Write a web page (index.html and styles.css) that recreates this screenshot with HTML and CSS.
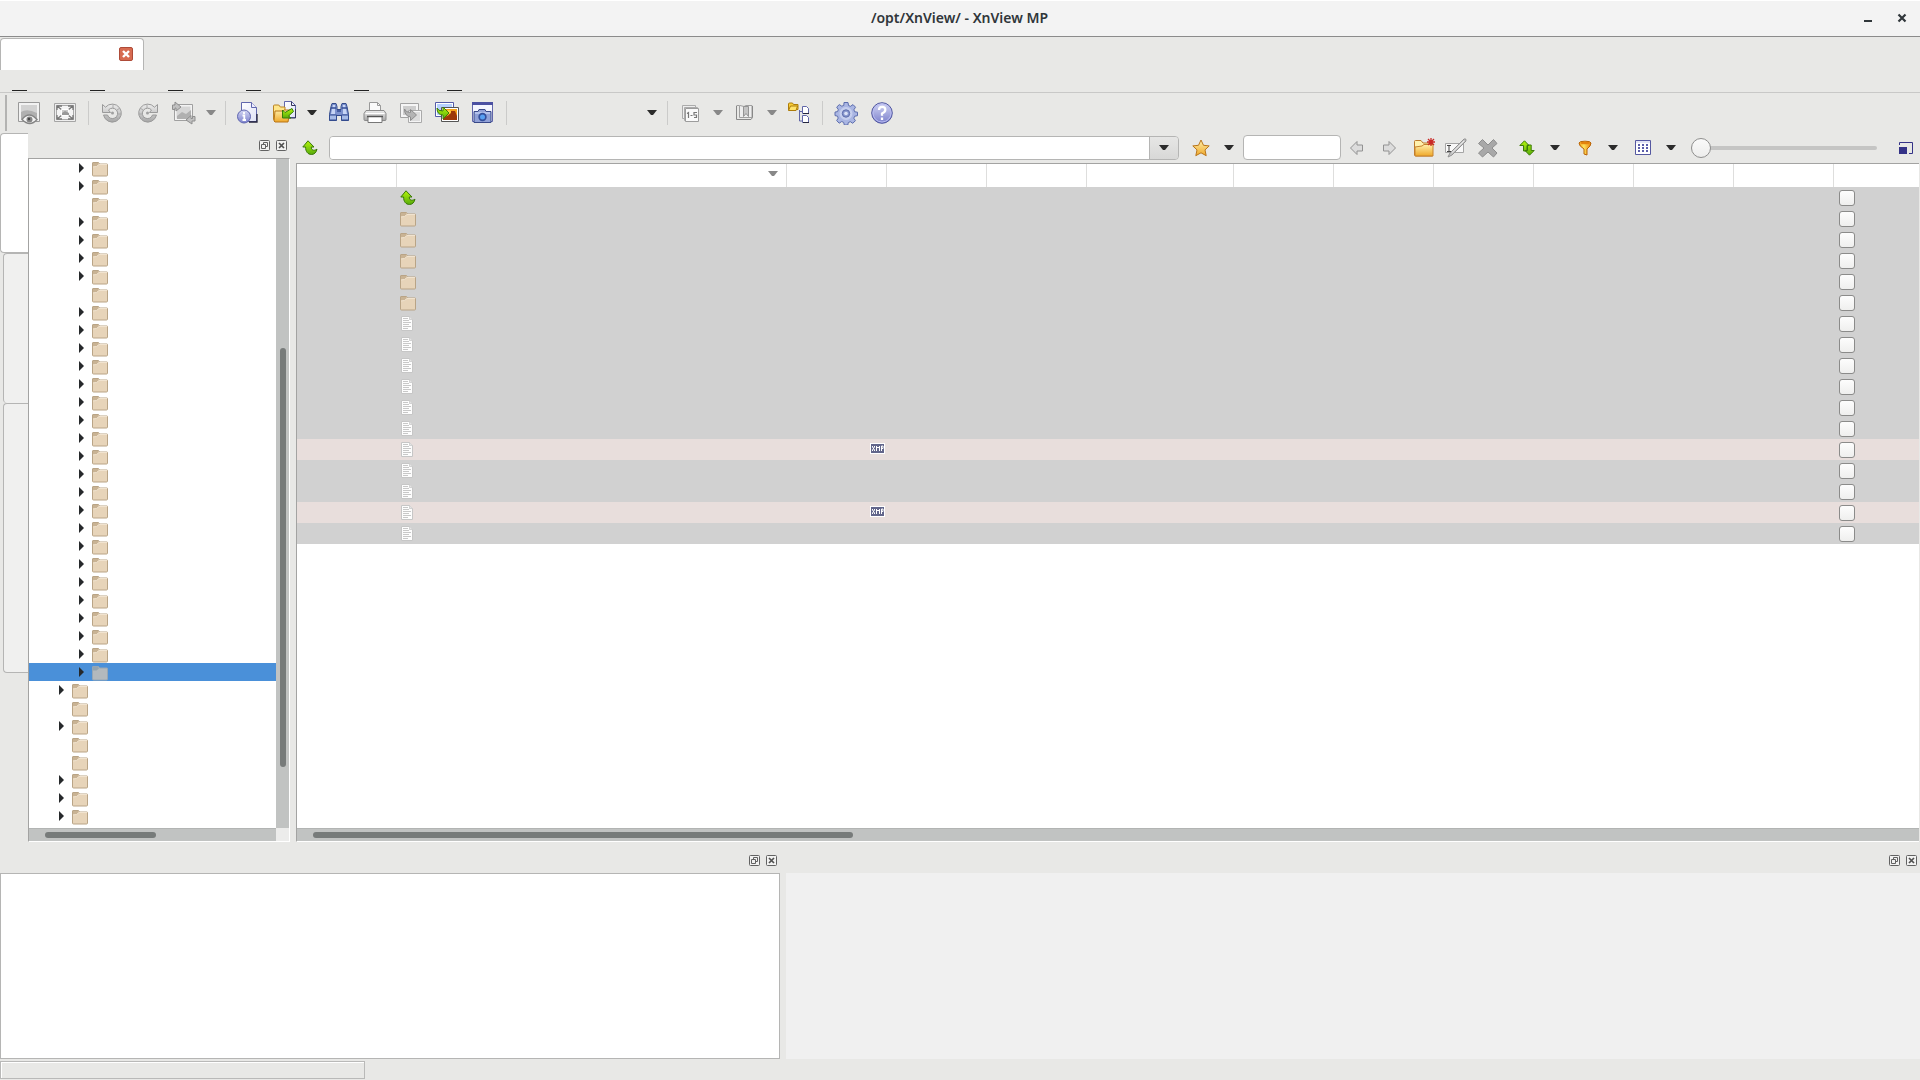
FILE: index.html
```html
<!DOCTYPE html>
<html lang="en">
<head>
<meta charset="utf-8">
<meta name="viewport" content="width=device-width, initial-scale=1">
<title>/opt/XnView/ - XnView MP</title>
<link rel="stylesheet" href="styles.css">
</head>
<body>
<svg class="defs" aria-hidden="true">
  <defs>
    <linearGradient id="g-grey" x1="0" y1="0" x2="0" y2="1"><stop offset="0" stop-color="#ededed"/><stop offset="1" stop-color="#a6a6a6"/></linearGradient>
    <linearGradient id="g-green" x1="0" y1="0" x2="0" y2="1"><stop offset="0" stop-color="#b4f50c"/><stop offset="1" stop-color="#57ab0b"/></linearGradient>
    <linearGradient id="g-gold" x1="0" y1="0" x2="0" y2="1"><stop offset="0" stop-color="#ffefaa"/><stop offset="1" stop-color="#efa829"/></linearGradient>
    <linearGradient id="g-blue" x1="0" y1="0" x2="0" y2="1"><stop offset="0" stop-color="#d4d7f4"/><stop offset="1" stop-color="#7b80cc"/></linearGradient>
    <linearGradient id="g-page" x1="0" y1="0" x2="1" y2="1"><stop offset="0" stop-color="#fff"/><stop offset="1" stop-color="#dfe2f7"/></linearGradient>
    <linearGradient id="g-orange" x1="0" y1="0" x2="1" y2="0"><stop offset="0" stop-color="#f39a15"/><stop offset=".4" stop-color="#ffe35c"/><stop offset="1" stop-color="#e87f0a"/></linearGradient>
  </defs>
  <symbol id="caret" viewBox="0 0 10 6"><path d="M0 0h10L6 5H4z" fill="currentColor"/></symbol>
  <symbol id="branch" viewBox="0 0 6 10"><path d="M0 0l5 5-5 5z" fill="#26292b"/></symbol>
  <symbol id="folder" viewBox="0 0 16 16"><path d="M.5 14V2Q.5 1.500 1 1.500h5.500l1 1.500H15q.5 0 .5.500V14q0 1-1 1h-13q-1 0-1-1z" fill="#e7d4b9" stroke="#b9a486"/><path d="M1 5.500V2h5l1 1.500L4.500 5.500z" fill="#c9b394"/><path d="M1 6l3.500-.5L7 3.500h8" fill="none" stroke="#f1e3cf"/></symbol>
  <symbol id="folder-selected" viewBox="0 0 16 16"><path d="M.5 14V2Q.5 1.500 1 1.500h5.500l1 1.500H15q.5 0 .5.500V14q0 1-1 1h-13q-1 0-1-1z" fill="#b3b9bd" stroke="#96a6b4"/><path d="M1 5.500V2h5l1 1.500L4.500 5.500z" fill="#93a3ae"/></symbol>
  <symbol id="up" viewBox="0 0 16 16"><path d="M6 .8L12 7H9.300c-.1 3 2.200 4.300 5.700 2.200-.7 3.300-2.800 5.300-5.500 5.300C5.800 14.500 3.500 11.500 3.600 7H.8z" fill="url(#g-green)" stroke="#3a7808"/></symbol>
  <symbol id="document" viewBox="0 0 16 16"><path d="M1.500.500h8l3 3v11h-11z" fill="#fdfdfd" stroke="#c6c6c6"/><path d="M9.500.500v3h3" fill="#e4e4e4" stroke="#c4c4c4" stroke-width=".7"/><path d="M3 2.500h5M3 4.500h6M3 6.500h8M3 8.500h6M3 10.500h8M3 12.500h5" stroke="#c8c8c8" fill="none"/></symbol>
  <symbol id="xmp" viewBox="0 0 16 12"><path d="M0 0h15v11H0z" fill="#fff"/><path d="M1 1h13v9H1z" fill="#62668b"/><path d="M2.500 3v1l2 3v1M4.500 3v1l-2 3v1M6.500 8V3M9.500 8V3M6.500 4.500h3M11.500 8V3h1.500v2.500h-1.500" fill="none" stroke="#fff"/></symbol>
  <symbol id="float" viewBox="0 0 12 12"><rect x=".5" y=".5" width="10" height="10" rx="1" fill="#f2f2f1" stroke="#626262"/><path d="M4.500 4.500v-2h4v4h-2M2.500 4.500h4v4h-4z" fill="none" stroke="#626262"/></symbol>
  <symbol id="dock-close" viewBox="0 0 12 12"><rect x=".5" y=".5" width="10" height="10" rx="1" fill="#f2f2f1" stroke="#626262"/><path d="M3 3l5 5M8 3L3 8" stroke="#505050" stroke-width="1.700"/></symbol>
  <symbol id="view" viewBox="0 0 24 24"><path d="M1.500 1.500h21v19h-21z" fill="#f2f2f2" stroke="#999"/><path d="M4 4h16v14H4z" fill="#d2d2d2"/><path d="M4 11q6-4 16 1v6H4z" fill="#b0b0b0"/><path d="M5 18.500q7-9 15 0-7 8-15 0z" fill="#f4f4f4" stroke="#858585" stroke-width="1.500"/><circle cx="12.500" cy="18.500" r="3" fill="#858585"/><circle cx="12" cy="18" r="1.200" fill="#444"/></symbol>
  <symbol id="fullscreen" viewBox="0 0 24 24"><path d="M1.500 2.500h21v18h-21z" fill="#eee" stroke="#a5a5a5"/><path d="M3.500 4.500h17v14h-17z" fill="#f5f5f5" stroke="#aaa"/><path d="M4 9V5h5M15 5h5v4M20 14v4h-5M9 18H4v-4M4 5l5 4M20 5l-5 4M4 18l5-4M20 18l-5-4" fill="none" stroke="#777" stroke-width="1.300"/><path d="M8.500 8.500h7v6h-7z" fill="#c9c9c9" stroke="#fff"/><path d="M9 12l3-2 4 2v2H9z" fill="#999"/></symbol>
  <symbol id="rotate" viewBox="0 0 24 24"><path d="M5.500 6.200A9 9 0 1 1 3.500 14h4A5.200 5.200 0 1 0 8.500 9l2 2.500h-8v-8z" fill="url(#g-grey)" stroke="#9a9a9a"/><path d="M13 3v4M20 7l-3 2M21.500 13h-4M19 19l-3-3" stroke="#aaa"/><circle cx="12.500" cy="12" r="1.500" fill="#a0a0a0"/></symbol>
  <symbol id="transform" viewBox="1 0 24 24"><path d="M3.500 3.500h18v16h-18z" fill="#f3f3f3" stroke="#a0a0a0"/><path d="M5.500 5.500h14v12h-14z" fill="#d6d6d6"/><path d="M6 15l5-4 4 2 5-4v9H6z" fill="#b0b0b0"/><path d="M1.500 8.500V4H4V1l6 5-5 4V7H4v1.500zM24 15.500v4.500h-3v3l-6-4 5-4.500v3h1.500v-2z" fill="#c0c0c0" stroke="#8e8e8e"/></symbol>
  <symbol id="info" viewBox="2 0 24 24"><path d="M6.500 1.500h10l5 5v14h-15z" fill="url(#g-page)" stroke="#6067ad"/><path d="M16.500 1.500v5h5" fill="#eef" stroke="#6067ad"/><path d="M14 21h8v-8" fill="none" stroke="#25253c" stroke-width="1.300"/><circle cx="9" cy="15.500" r="6.500" fill="url(#g-blue)" stroke="#6167b0"/><path d="M9 11v2M7.500 14.500H9.300V19M7.500 19h3.500" stroke="#fff" stroke-width="1.800" fill="none"/></symbol>
  <symbol id="open" viewBox="1 0 24 24"><path d="M12.500.5h7l4 4v12h-11z" fill="url(#g-page)" stroke="#6067ad"/><path d="M19.500.5v4h4M14 17h9.500V8" fill="none" stroke="#35375b"/><path d="M1.500 18V5q0-1 1-1h4.300l1.500 2H13v13H2z" fill="#ffe68a" stroke="#b98325"/><path d="M2 20l1-10h8l1-1h6l-2 12H3z" fill="url(#g-gold)" stroke="#b87519"/><path d="M20 7.500l1.500 3-5 4.500 2.500 2h-8.500V9l2.500 2.500z" fill="url(#g-green)" stroke="#347e0a"/></symbol>
  <symbol id="search" viewBox="0 0 24 24"><path d="M5 2.500h4l1 3v3h4v-3l1-3h4l1 3 1.500 8v6h-7v-5h-5v5h-7v-6L4 5.500z" fill="#7c91cd" stroke="#334b8b"/><path d="M6 4h2v9H4zM16 4h2l2 9h-4z" fill="#c7d5f5"/><path d="M2.500 14h7v5h-7zM14.500 14h7v5h-7z" fill="#a6bbe7" stroke="#344d91"/><path d="M10 10h4M4 7h5M15 7h5" stroke="#354e95" stroke-width="1.500"/></symbol>
  <symbol id="print" viewBox="0 0 24 24"><path d="M6.500 10V1.500h8l3 3V10" fill="#fafafa" stroke="#999"/><path d="M14.500 1.500v3h3" fill="none" stroke="#999"/><path d="M3 9.500h18l2 3v6q0 1-1 1H2q-1 0-1-1v-6z" fill="url(#g-grey)" stroke="#8b8b8b"/><path d="M2.500 12.500h19" stroke="#fff"/><path d="M5 15.500h14v6H5z" fill="#fff" stroke="#777"/><path d="M4 15.500h16" stroke="#555" stroke-width="1.500"/></symbol>
  <symbol id="convert" viewBox="0 0 24 24"><path d="M1.500 2.500h18v14h-18z" fill="#f5f5f5" stroke="#a3a3a3"/><path d="M4 5h13v9H4z" fill="#cdcdcd"/><path d="M9.500 9.500h13v12h-13z" fill="#f5f5f5" stroke="#aaa"/><path d="M11 11h10v9H11z" fill="#dcdcdc"/><path d="M5.500 8q1 3.500 6 3.500V8.500l6 5.500-6 5.500V16Q5.500 15 5.500 8z" fill="#b4b4b4" stroke="#8c8c8c"/></symbol>
  <symbol id="batch" viewBox="0 0 24 24"><path d="M.5 1.500h18v14H.5z" fill="#fff" stroke="#545ba8"/><path d="M2 3h15v11H2z" fill="#b6d1ff"/><path d="M6.500 6.500h17v14h-17z" fill="#fff" stroke="#555"/><path d="M8 8h14v11H8z" fill="#f6a21b"/><path d="M8 17l6-3 2-4h4l2 5v4H8z" fill="#9d3909"/><circle cx="14" cy="11" r="2" fill="#ffd83f"/><path d="M2 7q1 3 6 3V6l6 6-6 6v-4Q2 14 2 7z" fill="url(#g-green)" stroke="#3b7c08"/></symbol>
  <symbol id="capture" viewBox="0 0 24 24"><path d="M1.500 1.500h20v19h-20z" fill="#f4f5ff" stroke="#6166aa"/><path d="M1 1h21v3H1z" fill="#4b50a2"/><path d="M3 10.500h4l1-2h6l1 2h5v11H3z" fill="#91a1d7" stroke="#394988"/><path d="M4 12h15" stroke="#d6e1ff"/><circle cx="11.500" cy="16" r="4.200" fill="#344f9b"/><circle cx="11.500" cy="16" r="2.500" fill="#58a0f2"/></symbol>
  <symbol id="sort" viewBox="1 0 24 24"><path d="M4.500 4.500h13v13h-13zM6.500 6.500h13v13h-13z" fill="#eee" stroke="#ababab"/><path d="M7.500 7.500h13v13h-13z" fill="#fafafa" stroke="#9c9c9c"/><path d="M9 12.500l1.500-1V17M12.500 14.500h2M19 11.500h-3V14h2.500v2.500H16" fill="none" stroke="#777" stroke-width="1.200"/></symbol>
  <symbol id="bookmark" viewBox="1 0 24 24"><path d="M4.500 4.500h3v12H20v-12h-6l-2 1-4-1" fill="#eee" stroke="#9f9f9f"/><path d="M4.500 5v13.500H19l1.500-2V5" fill="none" stroke="#888"/><path d="M11.500 5.500h5v10l-2.500-3-2.500 3z" fill="#c4c4c4" stroke="#949494"/></symbol>
  <symbol id="folders" viewBox="0 0 24 24"><path d="M12.500 9v11H16M12.500 10.500H16" fill="none" stroke="#6066a8"/><path d="M1.500 9V3q0-1 1-1h3l1 1.500h4.500v5z" fill="#f8cd38" stroke="#ad7c0a"/><path d="M3.500 5h7L9 9.500H1.500z" fill="#ffe36b" stroke="#ad7c0a"/><path d="M15.500 5.500h4l2 2v5h-6zM15.500 14.500h4l2 2v5h-6z" fill="#fff" stroke="#6066a8"/><path d="M16 12.500h6M16 21.500h6" stroke="#24253d"/></symbol>
  <symbol id="gear" viewBox="0 0 24 24"><path d="M10 1.500h4l.5 3 2 .8 2.500-1.700 2.500 2.600-1.600 2.600.8 2 2.800.4v3.500l-2.800.5-.9 2 1.600 2.500-2.600 2.600-2.500-1.600-2 .8-.5 2.500h-3.500l-.6-2.600-2-.9-2.500 1.700-2.500-2.600 1.500-2.500-.7-2-2.500-.5v-3.500l2.600-.5.7-2-1.600-2.500 2.600-2.500 2.500 1.600 2-.8z" fill="#aab6e3" stroke="#5c6dad"/><circle cx="12" cy="12.500" r="6.500" fill="#c6cfee"/><circle cx="12" cy="12.500" r="3.700" fill="#8998ce" stroke="#5d6cab"/><circle cx="12" cy="12.500" r="1.800" fill="#dce3f6"/></symbol>
  <symbol id="help" viewBox="0 0 24 24"><circle cx="12" cy="12" r="10.300" fill="url(#g-blue)" stroke="#5056a0"/><circle cx="12" cy="12" r="9" fill="none" stroke="#b7baf0"/><path d="M9 9q0-3.200 3.200-3.200T15.300 8.800Q15.300 11 12 12.500v2.200M12 16.500V19" fill="none" stroke="#fff" stroke-width="2.300"/></symbol>
  <symbol id="star" viewBox="0 0 18 18"><path d="M9 1l2.500 5.300 5.700.6-4.200 4 1.200 5.800L9 13.800 3.800 16.700 5 10.900.8 6.900l5.700-.6z" fill="url(#g-gold)" stroke="#b9761c"/></symbol>
  <symbol id="back" viewBox="0 0 16 16"><path d="M8 1.500v3.500h5.500v6H8v3.500L1.500 8z" fill="#dcdcdc" stroke="#929292"/></symbol>
  <symbol id="forward" viewBox="0 0 16 16"><path d="M8 1.500v3.500H2.500v6H8v3.500L14.500 8z" fill="#dcdcdc" stroke="#929292"/></symbol>
  <symbol id="new-folder" viewBox="0 0 24 24"><path d="M2.500 19V5.500q0-1 1-1H9l2 2.500h9.500v13h-17z" fill="#fff1ad" stroke="#bb792b"/><path d="M3 11l7-1 2-1.500h9V20H3z" fill="url(#g-gold)" stroke="#c6822e"/><path d="M19 2v8M15 6h8M16 3l6 6M22 3l-6 6" stroke="#ca2927" stroke-width="1.300"/></symbol>
  <symbol id="rename" viewBox="0 0 24 24"><path d="M1.500 7.500h18v9h-18z" fill="#f8f8f8" stroke="#a5a5a5"/><path d="M3 9.500h4M5 9.500v6M3 15.500h4" stroke="#444"/><path d="M4 21l2-4L20 3q2.500-1 2 2L8 19z" fill="#c4c4c4" stroke="#929292"/><path d="M8 16.500L20 5" stroke="#eee"/></symbol>
  <symbol id="delete" viewBox="0 0 24 24"><path d="M6.500 3.500L12 9l5.500-5.500 3.500 4-5 4.500 5 5-3.500 4-5.500-5-5.500 5-4-4L8 12 2.500 7.500z" fill="#a8a8a8" stroke="#8d8d8d"/></symbol>
  <symbol id="refresh" viewBox="0 0 16 16"><path d="M5.500.8L10 5.500H8V11H4.500V5.500H.8zM10.500 15.200L15.200 10.500h-3V5H8.500v5.500h-2.500z" fill="url(#g-green)" stroke="#3c7b08"/></symbol>
  <symbol id="filter" viewBox="0 0 16 16"><path d="M2 3q0-1.800 6-1.800T14 3q0 3-4 6v6L7 14V9Q2 6 2 3z" fill="url(#g-orange)" stroke="#b96305"/><ellipse cx="8" cy="3" rx="4.500" ry="1.300" fill="#e4820c"/></symbol>
  <symbol id="grid" viewBox="0 0 16 16"><path d="M.5.500h15v14H.5z" fill="#fff" stroke="#5558a0"/><path d="M3 5h10M3 8h10M3 11h10" stroke="#5b5eaa" stroke-width="2" stroke-dasharray="2"/><path d="M1 2h14" stroke="#c5c9eb"/></symbol>
  <symbol id="resize" viewBox="0 0 14 12"><path d="M.5 3V.5h13v11H10" fill="none" stroke="#343287"/><path d="M0 5h8v7H0z" fill="#343287"/></symbol>
</svg>

<header class="titlebar">
  <h1 class="title">/opt/XnView/ - XnView MP</h1>
  <button class="window-button minimize" aria-label="Minimize"></button>
  <button class="window-button" aria-label="Close"><svg viewBox="0 0 10 10"><path d="M1.500 1.500l7 7M8.500 1.500l-7 7" stroke="#30363a" stroke-width="2.200"/></svg></button>
</header>
<div class="tab-strip">
  <div class="tab"><button class="tab-close" aria-label="Close tab"><svg viewBox="0 0 14 14"><rect x=".5" y=".5" width="13" height="13" rx="1.500" fill="#d76b51" stroke="#ae4b38"/><path d="M4 4l6 6M10 4l-6 6" stroke="#fff" stroke-width="2.400"/></svg></button></div>
</div>
<nav class="menubar" aria-label="Main menu">
  <button aria-label="File"><span></span></button><button aria-label="Edit"><span></span></button><button aria-label="View"><span></span></button><button class="wide" aria-label="Create"><span></span></button><button class="medium" aria-label="Tools"><span></span></button><button aria-label="Help"><span></span></button>
</nav>
<div class="toolbar" role="toolbar" aria-label="Main toolbar">
  <i class="handle"></i>
  <button class="tool" aria-label="View"><svg><use href="#view"/></svg></button>
  <button class="tool" aria-label="Full screen"><svg><use href="#fullscreen"/></svg></button>
  <i class="separator"></i>
  <button class="tool" aria-label="Rotate left"><svg><use href="#rotate"/></svg></button>
  <button class="tool flipped" aria-label="Rotate right"><svg><use href="#rotate"/></svg></button>
  <button class="tool" aria-label="Transform"><svg><use href="#transform"/></svg></button>
  <button class="drop muted" aria-label="Transform options"><svg><use href="#caret"/></svg></button>
  <i class="separator"></i>
  <button class="tool" aria-label="Properties"><svg><use href="#info"/></svg></button>
  <button class="tool" aria-label="Open"><svg><use href="#open"/></svg></button>
  <button class="drop" aria-label="Recent"><svg><use href="#caret"/></svg></button>
  <button class="tool" aria-label="Search"><svg><use href="#search"/></svg></button>
  <button class="tool" aria-label="Print"><svg><use href="#print"/></svg></button>
  <button class="tool" aria-label="Convert"><svg><use href="#convert"/></svg></button>
  <button class="tool" aria-label="Batch convert"><svg><use href="#batch"/></svg></button>
  <button class="tool" aria-label="Capture"><svg><use href="#capture"/></svg></button>
  <i class="separator"></i>
  <button class="layout-choice" aria-label="Layout"><svg><use href="#caret"/></svg></button>
  <i class="separator"></i>
  <button class="tool" aria-label="Sort"><svg><use href="#sort"/></svg></button>
  <button class="drop muted" aria-label="Sort options"><svg><use href="#caret"/></svg></button>
  <button class="tool" aria-label="Bookmarks"><svg><use href="#bookmark"/></svg></button>
  <button class="drop muted" aria-label="Bookmark options"><svg><use href="#caret"/></svg></button>
  <button class="tool" aria-label="Folder tree"><svg><use href="#folders"/></svg></button>
  <i class="separator"></i>
  <button class="tool" aria-label="Settings"><svg><use href="#gear"/></svg></button>
  <button class="tool" aria-label="About"><svg><use href="#help"/></svg></button>
</div>

<div class="workspace">
  <div class="side-tabs" role="tablist" aria-label="Side panels">
    <button class="side-tab active" role="tab" aria-selected="true" aria-label="Folders"></button>
    <button class="side-tab" role="tab" aria-label="Favorites"></button>
    <button class="side-tab tall" role="tab" aria-label="Categories filter"></button>
  </div>
  <aside class="folders">
    <div class="dock-head"><button aria-label="Float"><svg><use href="#float"/></svg></button><button aria-label="Close"><svg><use href="#dock-close"/></svg></button></div>
    <div class="tree-frame">
      <ul class="tree" id="folder-tree"></ul>
      <div class="vbar"><i></i></div>
      <div class="hbar"><i></i></div>
      <div class="corner"></div>
    </div>
  </aside>
  <main class="browser">
    <div class="pathbar">
      <button class="nav edge" aria-label="Up"><svg class="small"><use href="#up"/></svg></button>
      <div class="path"><input type="text" aria-label="Location"><button aria-label="Location history"><svg class="caret"><use href="#caret"/></svg></button></div>
      <div class="group"><button class="nav" aria-label="Favorite"><svg class="star"><use href="#star"/></svg></button><button class="more" aria-label="Favorites list"><svg class="caret"><use href="#caret"/></svg></button></div>
      <div class="group find"><input type="text" aria-label="Quick search"><button class="nav" aria-label="Back"><svg class="small"><use href="#back"/></svg></button><button class="nav" aria-label="Forward"><svg class="small"><use href="#forward"/></svg></button></div>
      <div class="group edit"><button class="nav" aria-label="New folder"><svg><use href="#new-folder"/></svg></button><button class="nav" aria-label="Rename"><svg><use href="#rename"/></svg></button><button class="nav" aria-label="Delete"><svg><use href="#delete"/></svg></button></div>
      <div class="group"><button class="nav" aria-label="Refresh"><svg class="small"><use href="#refresh"/></svg></button><button class="more" aria-label="Sort order"><svg class="caret"><use href="#caret"/></svg></button></div>
      <div class="group"><button class="nav" aria-label="Filter"><svg class="small"><use href="#filter"/></svg></button><button class="more" aria-label="Filter options"><svg class="caret"><use href="#caret"/></svg></button></div>
      <div class="group"><button class="nav" aria-label="View as"><svg class="small"><use href="#grid"/></svg></button><button class="more" aria-label="View options"><svg class="caret"><use href="#caret"/></svg></button></div>
      <input class="zoom" type="range" min="0" max="100" value="0" aria-label="Thumbnail size">
      <button class="nav edge" aria-label="Preview size"><svg class="resize"><use href="#resize"/></svg></button>
    </div>
    <div class="list-frame">
      <div class="list">
        <table>
          <colgroup><col class="c-thumb"><col class="c-name"><col class="c-std"><col class="c-std"><col class="c-std"><col class="c-date"><col class="c-std"><col class="c-std"><col class="c-std"><col class="c-std"><col class="c-std"><col class="c-std"><col></colgroup>
          <thead><tr><th></th><th><svg class="caret"><use href="#caret"/></svg></th><th></th><th></th><th></th><th></th><th></th><th></th><th></th><th></th><th></th><th></th><th></th></tr></thead>
          <tbody id="files"></tbody>
        </table>
      </div>
      <div class="hbar"><i></i></div>
    </div>
  </main>
</div>

<div class="lower">
  <section class="details"><div class="dock-head"><button aria-label="Float"><svg><use href="#float"/></svg></button><button aria-label="Close"><svg><use href="#dock-close"/></svg></button></div><div class="details-body"></div></section>
  <section class="preview"><div class="dock-head"><button aria-label="Float"><svg><use href="#float"/></svg></button><button aria-label="Close"><svg><use href="#dock-close"/></svg></button></div><div class="preview-body"></div></section>
</div>
<footer class="statusbar"><div class="status-field"></div></footer>
<script src="script.js"></script>
</body>
</html>
```
FILE: styles.css
```css
* { box-sizing: border-box; }
body {
  margin: 0;
  height: 100vh;
  display: flex;
  flex-direction: column;
  overflow: hidden;
  background: #e8e8e6;
  color: #30363a;
  font: 14px "Noto Sans", sans-serif;
}
button { margin: 0; padding: 0; border: 0; background: none; color: inherit; font: inherit; }
input { margin: 0; font: inherit; }
svg { display: block; }
.defs { position: absolute; width: 0; height: 0; }

.titlebar {
  flex: none;
  height: 37px;
  display: grid;
  grid-template-columns: 1fr auto 34px 34px;
  align-items: center;
  padding-right: 1px;
  padding-bottom: 1px;
  background: #f3f3f3;
  border-top: 1px solid #fff;
  border-bottom: 1px solid #8b8b8b;
}
.title { grid-column: 1 / -1; grid-row: 1; margin: 0; text-align: center; font-size: 14px; line-height: 20px; font-weight: 600; }
.window-button { grid-column: 4; grid-row: 1; height: 34px; display: grid; place-items: center; }
.window-button svg { width: 10px; height: 10px; }
.window-button.minimize { grid-column: 3; }
.minimize::after { content: ""; width: 8px; height: 2px; margin-top: 6px; background: #30363a; }

.tab-strip { flex: none; height: 33px; padding-top: 1px; }
.tab {
  width: 144px;
  height: 32px;
  padding: 0 10px 2px 0;
  display: flex;
  align-items: center;
  justify-content: flex-end;
  background: #fff;
  border: 1px solid #b5b5b4;
  border-bottom: 0;
  border-radius: 4px 4px 0 0;
}
.tab-close svg { width: 14px; height: 14px; }

.menubar { flex: none; height: 23px; display: flex; padding-left: 12px; border-bottom: 1px solid #c8c8c7; }
.menubar button { width: 78px; display: flex; align-items: flex-end; padding-bottom: 1px; }
.menubar .wide { width: 108px; }
.menubar .medium { width: 93px; }
.menubar span { width: 15px; height: 1px; background: #222; }

.toolbar { flex: none; height: 40px; display: flex; align-items: center; padding-left: 5px; }
.handle { width: 2px; height: 36px; margin-right: 4px; background: #b3b3b2; }
.tool { width: 36px; height: 36px; display: grid; place-items: center; }
.tool svg { width: 24px; height: 24px; }
.flipped { transform: scaleX(-1); }
.drop { width: 18px; height: 36px; display: grid; place-items: center; color: #2b2b2b; }
.drop svg, .layout-choice svg, .caret { width: 10px; height: 6px; }
.drop.muted { color: #888; }
.separator { width: 11px; height: 24px; background: linear-gradient(#cbcbca, #cbcbca) center / 1px 100% no-repeat; }
.layout-choice { width: 150px; height: 36px; padding-right: 5px; display: flex; align-items: center; justify-content: flex-end; color: #2b2b2b; }

.workspace { flex: 1; min-height: 0; display: grid; grid-template: minmax(0, 1fr) / 28px 262px minmax(0, 1fr); }
.side-tabs { display: flex; flex-direction: column; }
.side-tab { height: 150px; margin-left: 3px; background: #f0f0ef; border: 1px solid #b5b5b4; border-right: 0; border-bottom: 0; border-radius: 4px 0 0 4px; }
.side-tab.active { height: 120px; margin-left: 0; background: #fff; border-bottom: 1px solid #b5b5b4; }
.side-tab.tall { height: 270px; border-bottom: 1px solid #b5b5b4; }
.folders { min-height: 0; display: flex; flex-direction: column; }
.dock-head { flex: none; height: 25px; display: flex; justify-content: flex-end; align-items: center; gap: 5px; padding-right: 2px; }
.dock-head svg { width: 12px; height: 12px; }
.tree-frame {
  flex: 1;
  min-height: 0;
  display: grid;
  grid-template: minmax(0, 1fr) 13px / minmax(0, 1fr) 13px;
  background: #fff;
  border: 1px solid #a3a3a2;
  border-right-color: #fff;
  border-bottom-color: #fff;
}
.tree { margin: 0; padding: 0; list-style: none; overflow: hidden; }
.tree li { height: 18px; padding-left: 50px; display: flex; align-items: center; }
.tree li.child { padding-left: 30px; }
.tree li.selected { background: #4a90d9; }
.twisty { width: 13px; }
.twisty svg { width: 6px; height: 10px; }
.tree li > svg { width: 16px; height: 16px; margin-top: 1px; }
.vbar { display: grid; grid-template-rows: 189fr 419fr 61fr; justify-items: center; background: #c1c3c2; }
.vbar i { grid-row: 2; width: 6px; border-radius: 3px; background: #777b7a; }
.hbar { display: grid; grid-template-columns: 16fr 111fr 120fr; align-items: center; background: #c1c3c2; border-top: 1px solid #b2b4b3; }
.hbar i { grid-column: 2; height: 6px; border-radius: 3px; background: #777b7a; }
.corner { background: #ececeb; }

.browser { min-width: 0; min-height: 0; display: flex; flex-direction: column; padding-left: 6px; }
.pathbar { flex: none; height: 30px; display: flex; align-items: center; gap: 2px; padding-bottom: 1px; }
.nav { width: 32px; height: 28px; display: grid; place-items: center; flex: none; }
.nav.edge { width: 28px; }
.nav svg { width: 24px; height: 24px; }
.nav .small { width: 16px; height: 16px; }
.nav .star { width: 18px; height: 18px; }
.nav .resize { width: 14px; height: 12px; }
.path { flex: 1; min-width: 0; height: 24px; margin: 0 4px 0 3px; display: flex; border: 1px solid #b5b5b4; border-radius: 4px; overflow: hidden; }
.path input { flex: 1; min-width: 0; border: 0; padding: 0 6px; background: #fff; }
.path button { width: 29px; display: grid; place-items: center; border-left: 1px solid #b5b5b4; background: linear-gradient(#e6e6e5, #d8d8d7); }
.group { display: flex; align-items: center; flex: none; }
.more { width: 24px; height: 28px; display: grid; place-items: center; }
.caret { color: #2b2b2b; }
.find { margin-right: 1px; }
.edit { margin-right: 5px; }
.find input { width: 98px; height: 25px; border: 1px solid #b5b5b4; border-radius: 4px; background: #fff; }
.zoom { width: 186px; height: 20px; margin: 0 13px 0 6px; flex: none; appearance: none; background: none; }
.zoom::-webkit-slider-runnable-track { height: 4px; border-radius: 2px; background: #c5c5c4; }
.zoom::-webkit-slider-thumb { appearance: none; width: 20px; height: 20px; margin-top: -8px; border: 1px solid #8f8f8e; border-radius: 50%; background: linear-gradient(#fafafa, #ededec); }

.list-frame { flex: 1; min-height: 0; display: flex; flex-direction: column; margin-right: 1px; background: #fff; border: 1px solid #a3a3a2; border-right: 0; border-bottom-color: #fff; }
.list { flex: 1; min-height: 0; overflow: hidden; }
.list-frame .hbar { height: 13px; grid-template-columns: 16fr 540fr 1066fr; }
table { width: 100%; table-layout: fixed; border-spacing: 0; }
th, td { padding: 0; }
th { height: 23px; border-right: 1px solid #dededd; }
th:last-child { border-right: 0; }
th .caret { margin: 0 8px 3px auto; color: #888; }
.c-std { width: 100px; }
.c-thumb { width: 100px; }
.c-name { width: 390px; }
.c-date { width: 147px; }
td { height: 21px; background: #d1d1d1; }
td svg { width: 16px; height: 16px; margin-left: 3px; }
td .xmp { height: 12px; margin: 0 1px 2px auto; }
.tagged td { background: #e8dedc; }
td input { appearance: none; display: block; width: 16px; height: 16px; margin-left: 5px; border: 1px solid #8b8b8a; border-radius: 3px; background: linear-gradient(#fdfdfd, #efefee); }

.lower { flex: none; height: 218px; display: grid; grid-template-columns: 780fr 1134fr; gap: 6px; }
.details, .preview { display: flex; flex-direction: column; }
.lower .dock-head { height: 31px; padding-top: 6px; }
.details-body { flex: 1; background: #fff; border: 1px solid #b5b5b4; margin-bottom: 1px; }
.preview-body { flex: 1; background: #f0f0f0; margin-bottom: 1px; }
.statusbar { flex: none; height: 20px; padding-top: 1px; }
.status-field { width: 19%; height: 18px; border: 1px solid #b9b9b8; box-shadow: inset 1px 1px #fff; }
```
FILE: script.js
```js
const use = (id, cls = '') => `<svg class="${cls}"><use href="#${id}"/></svg>`;

// Folder tree: 29 nested folders, then their parents' siblings.
const leaves = new Set([2, 7, 30, 32, 33]);
document.getElementById('folder-tree').innerHTML = Array.from({ length: 38 }, (_, i) => {
  const cls = i === 28 ? 'selected' : i > 28 ? 'child' : '';
  const icon = i === 28 ? 'folder-selected' : 'folder';
  return `<li class="${cls}"><span class="twisty">${leaves.has(i) ? '' : use('branch')}</span>${use(icon)}</li>`;
}).join('');

// File list: parent link, five folders, eleven files.
const tagged = new Set([12, 15]);
document.getElementById('files').innerHTML = Array.from({ length: 17 }, (_, i) => {
  const icon = i === 0 ? 'up' : i < 6 ? 'folder' : 'document';
  const mark = tagged.has(i) ? use('xmp', 'xmp') : '';
  return `<tr class="${tagged.has(i) ? 'tagged' : ''}"><td></td><td>${use(icon)}</td><td>${mark}</td>${'<td></td>'.repeat(9)}<td><input type="checkbox" aria-label="Select row ${i + 1}"></td></tr>`;
}).join('');
```
